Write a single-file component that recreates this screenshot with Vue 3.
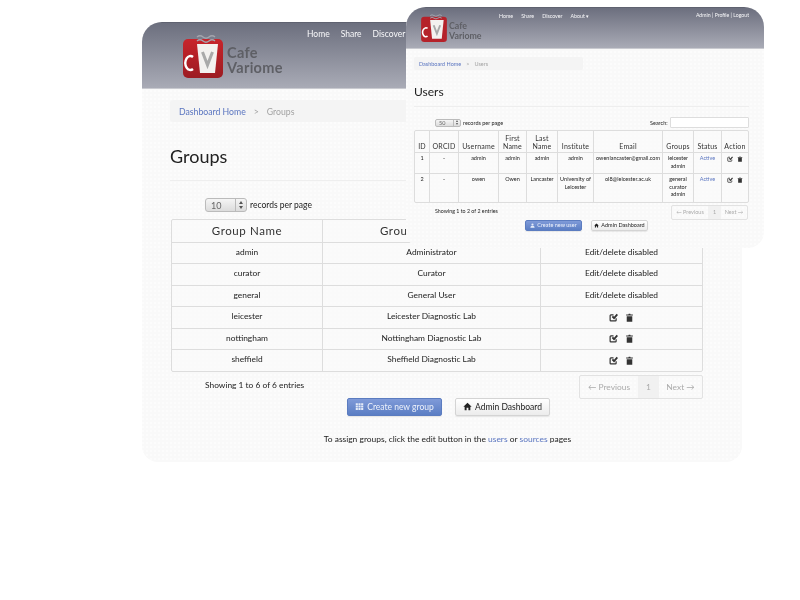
<template>
  <div class="desktop">
    <!-- back window: groups -->
    <section class="window groups-window">
      <header class="top-bar">
        <div class="logo">
          <svg class="logo-mark" viewBox="0 0 40 45">
            <defs>
              <linearGradient id="cup-red" x1="0" y1="0" x2="0" y2="1">
                <stop offset="0" stop-color="#c8242b" />
                <stop offset="1" stop-color="#9c1c22" />
              </linearGradient>
            </defs>
            <rect x="0" y="6" width="40" height="39" rx="5" fill="url(#cup-red)" />
            <path d="M14 4q3-2.4 6 0t6 0 6 0M14 8q3-2.4 6 0t6 0 6 0" fill="none" stroke="#a3a5ae" stroke-width="1.5" />
            <path d="M14 11 H35 L32 40 H17 Z" fill="#f3f1ef" />
            <path d="M19.5 19 L24.5 32 L29.5 19" fill="none" stroke="#a9a9a9" stroke-width="3" />
            <path d="M10 24 A5 7 0 1 0 10 36" fill="none" stroke="#fff" stroke-width="2.4" />
          </svg>
          <div class="logo-text">Cafe<br />Variome</div>
        </div>
        <nav class="nav">
          <a>Home</a><a>Share</a><a>Discover</a>
        </nav>
      </header>
      <div class="body">
        <div class="crumbs"><a>Dashboard Home</a><i>&gt;</i><span>Groups</span></div>
        <h1>Groups</h1>
        <hr />
        <div class="length">
          <span class="select"><b>10</b><em></em></span>
          records per page
        </div>
        <table>
          <colgroup>
            <col style="width: 150px" /><col style="width: 218px" /><col />
          </colgroup>
          <thead>
            <tr><th>Group Name</th><th>Group Description</th><th>Action</th></tr>
          </thead>
          <tbody>
            <tr v-for="g in groups" :key="g.name">
              <td>{{ g.name }}</td>
              <td>{{ g.desc }}</td>
              <td>
                <template v-if="g.locked">Edit/delete disabled</template>
                <span v-else class="actions">
                  <svg viewBox="0 0 12 12"><path d="M9.5 7v2.5a1 1 0 0 1-1 1h-6a1 1 0 0 1-1-1v-6a1 1 0 0 1 1-1H6" fill="none" stroke="#333" stroke-width="1.6" /><path d="M3.6 5.2l1.9-1.4 1.2 1.3L10.2 1 12 2.6 6.8 8.6z" fill="#333" /></svg>
                  <svg viewBox="0 0 12 12"><path d="M1.5 2h3l.5-1h2l.5 1h3v1.4h-9zM2.3 4.2h7.4v7.3H2.3z" fill="#333" /></svg>
                </span>
              </td>
            </tr>
          </tbody>
        </table>
        <div class="table-foot">
          <span class="info">Showing 1 to 6 of 6 entries</span>
          <div class="pager">
            <span>← Previous</span><span class="current">1</span><span>Next →</span>
          </div>
        </div>
        <div class="buttons">
          <a class="btn primary">
            <svg viewBox="0 0 12 12"><path d="M1 1.5h2.8v2.5H1zM4.6 1.5h2.8v2.5H4.6zM8.2 1.5H11v2.5H8.2zM1 4.8h2.8v2.5H1zM4.6 4.8h2.8v2.5H4.6zM8.2 4.8H11v2.5H8.2zM1 8.1h2.8v2.5H1zM4.6 8.1h2.8v2.5H4.6zM8.2 8.1H11v2.5H8.2z" fill="#e6ecf8" /></svg>
            Create new group
          </a>
          <a class="btn">
            <svg viewBox="0 0 12 12"><path d="M6 1L.5 6.2h1.7V11h2.6V7.6h2.4V11h2.6V6.2h1.7z" fill="#222" /></svg>
            Admin Dashboard
          </a>
        </div>
        <p class="note">To assign groups, click the edit button in the <a>users</a> or <a>sources</a> pages</p>
      </div>
    </section>

    <!-- front window: users -->
    <section class="window users-window">
      <header class="top-bar">
        <div class="logo">
          <svg class="logo-mark" viewBox="0 0 40 45">
            <rect x="0" y="6" width="40" height="39" rx="5" fill="#b5222a" />
            <path d="M14 4q3-2.4 6 0t6 0 6 0M14 8q3-2.4 6 0t6 0 6 0" fill="none" stroke="#a3a5ae" stroke-width="1.5" />
            <path d="M14 11 H35 L32 40 H17 Z" fill="#f3f1ef" />
            <path d="M19.5 19 L24.5 32 L29.5 19" fill="none" stroke="#a9a9a9" stroke-width="3" />
            <path d="M10 24 A5 7 0 1 0 10 36" fill="none" stroke="#fff" stroke-width="2.4" />
          </svg>
          <div class="logo-text">Cafe<br />Variome</div>
        </div>
        <nav class="nav">
          <a>Home</a><a>Share</a><a>Discover</a><a>About ▾</a>
        </nav>
        <div class="account">Admin | Profile | Logout</div>
      </header>
      <div class="body">
        <div class="crumbs"><a>Dashboard Home</a><i>&gt;</i><span>Users</span></div>
        <h1>Users</h1>
        <hr />
        <div class="length-row">
          <div class="length">
            <span class="select"><b>50</b><em></em></span>
            records per page
          </div>
          <div class="search">Search: <span class="input"></span></div>
        </div>
        <table>
          <colgroup>
            <col v-for="(w, i) in userCols" :key="i" :style="{ width: w + 'px' }" />
          </colgroup>
          <thead>
            <tr>
              <th>ID</th><th>ORCID</th><th>Username</th><th>First Name</th><th>Last Name</th>
              <th>Institute</th><th>Email</th><th>Groups</th><th>Status</th><th>Action</th>
            </tr>
          </thead>
          <tbody>
            <tr v-for="u in users" :key="u.id">
              <td>{{ u.id }}</td>
              <td>-</td>
              <td>{{ u.username }}</td>
              <td>{{ u.first }}</td>
              <td>{{ u.last }}</td>
              <td>{{ u.institute }}</td>
              <td>{{ u.email }}</td>
              <td><div v-for="g in u.groups" :key="g">{{ g }}</div></td>
              <td><a>Active</a></td>
              <td>
                <span class="actions">
                  <svg viewBox="0 0 12 12"><path d="M9.5 7v2.5a1 1 0 0 1-1 1h-6a1 1 0 0 1-1-1v-6a1 1 0 0 1 1-1H6" fill="none" stroke="#333" stroke-width="1.6" /><path d="M3.6 5.2l1.9-1.4 1.2 1.3L10.2 1 12 2.6 6.8 8.6z" fill="#333" /></svg>
                  <svg viewBox="0 0 12 12"><path d="M1.5 2h3l.5-1h2l.5 1h3v1.4h-9zM2.3 4.2h7.4v7.3H2.3z" fill="#333" /></svg>
                </span>
              </td>
            </tr>
          </tbody>
        </table>
        <div class="table-foot">
          <span class="info">Showing 1 to 2 of 2 entries</span>
          <div class="pager">
            <span>← Previous</span><span class="current">1</span><span>Next →</span>
          </div>
        </div>
        <div class="buttons">
          <a class="btn primary">
            <svg viewBox="0 0 12 12"><circle cx="6" cy="3.5" r="2.6" fill="#e6ecf8" /><path d="M1 11.5c0-3.4 2-4.8 5-4.8s5 1.4 5 4.8z" fill="#e6ecf8" /></svg>
            Create new user
          </a>
          <a class="btn">
            <svg viewBox="0 0 12 12"><path d="M6 1L.5 6.2h1.7V11h2.6V7.6h2.4V11h2.6V6.2h1.7z" fill="#222" /></svg>
            Admin Dashboard
          </a>
        </div>
      </div>
    </section>
  </div>
</template>

<script setup>
const groups = [
  { name: 'admin', desc: 'Administrator', locked: true },
  { name: 'curator', desc: 'Curator', locked: true },
  { name: 'general', desc: 'General User', locked: true },
  { name: 'leicester', desc: 'Leicester Diagnostic Lab' },
  { name: 'nottingham', desc: 'Nottingham Diagnostic Lab' },
  { name: 'sheffield', desc: 'Sheffield Diagnostic Lab' }
]

const userCols = [14, 29, 40, 28, 31, 36, 69, 31, 28, 27]

const users = [
  {
    id: 1, username: 'admin', first: 'admin', last: 'admin', institute: 'admin',
    email: 'owenlancaster@gmail.com', groups: ['leicester', 'admin']
  },
  {
    id: 2, username: 'owen', first: 'Owen', last: 'Lancaster', institute: 'University of Leicester',
    email: 'ol8@leicester.ac.uk', groups: ['general', 'curator', 'admin']
  }
]
</script>

<style scoped>
.desktop {
  position: relative;
  width: 800px;
  height: 600px;
  overflow: hidden;
  background: #fff;
  font-family: Lato, "Open Sans", sans-serif;
  color: #222;
}
.window {
  position: absolute;
  box-sizing: border-box;
  border-radius: 20px 20px 16px 16px;
  background-color: #f9f9f9;
  background-image:
    radial-gradient(circle at 1px 1px, #fcfcfc 1px, transparent 1.2px);
  background-size: 4px 4px;
  overflow: hidden;
  filter: blur(0.2px);
}
.groups-window {
  left: 142px;
  top: 22px;
  width: 600px;
  height: 440px;
}
.users-window {
  left: 406px;
  top: 7px;
  width: 358px;
  height: 241px;
  filter: blur(0.3px);
}
.top-bar {
  display: flex;
  align-items: flex-start;
  background: linear-gradient(#6c6f7e, #a9abb6);
  border-top: 1px solid #5f6270;
  border-bottom: 1px solid #c9cad0;
  box-sizing: border-box;
}
.nav {
  display: flex;
  color: #f8f8fa;
}
.logo {
  display: flex;
  align-items: flex-start;
  color: #5e5f65;
}
.logo-text {
  font-weight: 700;
}
.body {
  display: flow-root;
}
h1 {
  margin: 0;
  font-weight: 400;
  color: #222;
}
hr {
  border: 0;
  border-top: 1px solid #eeeeee;
  margin: 0;
}
.crumbs {
  display: flex;
  align-items: center;
  background: #f4f4f4;
  color: #a3a3a3;
}
.crumbs i {
  font-style: normal;
}
.crumbs a,
.note a,
td a {
  color: #5a75c0;
}
.length {
  display: flex;
  align-items: center;
}
.select {
  display: inline-flex;
  align-items: center;
  box-sizing: border-box;
  border: 1px solid #bbb;
  background: linear-gradient(#f5f5f5, #dcdcdc);
  color: #666;
}
.select b {
  flex: 1;
  font-weight: 400;
}
.select em {
  align-self: stretch;
  border-left: 1px solid #bbb;
  position: relative;
}
.select em::before {
  content: "";
  position: absolute;
  left: 50%;
  top: 50%;
  width: 0;
  height: 0;
  margin-left: -2px;
  margin-top: -4px;
  border: 2px solid transparent;
  border-bottom: 3px solid #555;
  border-top: 0;
}
.select em::after {
  content: "";
  position: absolute;
  left: 50%;
  top: 50%;
  width: 0;
  height: 0;
  margin-left: -2px;
  margin-top: 1px;
  border: 2px solid transparent;
  border-top: 3px solid #555;
  border-bottom: 0;
}
table {
  table-layout: fixed;
  border-collapse: separate;
  border-spacing: 0;
  border: 1px solid #dddddd;
  border-radius: 2px;
  text-align: center;
  background: rgba(250, 250, 250, 0.6);
  box-sizing: border-box;
}
th,
td {
  padding: 0;
  box-sizing: border-box;
}
th {
  font-weight: 400;
  color: #333;
  border-left: 1px solid #dddddd;
  vertical-align: bottom;
}
td {
  border-top: 1px solid #dddddd;
  border-left: 1px solid #dddddd;
  vertical-align: top;
}
th:first-child,
td:first-child {
  border-left: 0;
}
.actions {
  display: inline-flex;
  align-items: center;
  vertical-align: middle;
}
.actions svg {
  display: block;
}
.table-foot {
  display: flex;
  justify-content: space-between;
  align-items: flex-start;
}
.pager {
  display: flex;
  border: 1px solid #e2e2e2;
  border-radius: 2px;
  color: #aaa;
  box-sizing: border-box;
}
.pager span {
  display: flex;
  align-items: center;
  justify-content: center;
}
.pager .current {
  background: #f1f1f1;
}
.buttons {
  display: flex;
  justify-content: center;
}
.btn {
  display: flex;
  align-items: center;
  justify-content: center;
  box-sizing: border-box;
  border: 1px solid #d4d4d4;
  border-radius: 2px;
  background: linear-gradient(#ffffff, #ececec);
  color: #222;
  box-shadow: 0 1px 1px rgba(0, 0, 0, 0.08);
}
.btn.primary {
  border-color: #5b7cc0;
  background: linear-gradient(#7f9ad8, #5b7ec4);
  color: #eef2fb;
}

/* back window sizes */
.groups-window .top-bar {
  height: 67px;
  padding-left: 41px;
}
.groups-window .logo {
  margin-top: 10px;
  gap: 4px;
}
.groups-window .logo-mark {
  width: 40px;
  height: 45px;
}
.groups-window .logo-text {
  width: 56px;
  margin-top: 12px;
  font-size: 14.5px;
  line-height: 15px;
  letter-spacing: 0.3px;
}
.groups-window .nav {
  margin-left: 24px;
  margin-top: 5px;
  gap: 11px;
  font-size: 8.5px;
  line-height: 13px;
}
.groups-window .body {
  padding: 11px 39px 0 28px;
}
.groups-window .crumbs {
  height: 22px;
  padding-left: 9px;
  gap: 8px;
  font-size: 8.7px;
  border-radius: 3px;
}
.groups-window h1 {
  margin-top: 23px;
  font-size: 18px;
  line-height: 22px;
}
.groups-window hr {
  margin-top: 13px;
}
.groups-window .length {
  margin: 17px 0 0 35px;
  gap: 3px;
  height: 14px;
  font-size: 8.5px;
}
.groups-window .select {
  width: 42px;
  height: 14px;
  border-radius: 3px;
  font-size: 9px;
  padding-left: 5px;
}
.groups-window .select em {
  width: 10px;
}
.groups-window table {
  width: 532px;
  margin-top: 7px;
  margin-left: 1px;
  font-size: 8.4px;
}
.groups-window th {
  height: 21.5px;
  font-size: 11.5px;
  letter-spacing: 0.6px;
  vertical-align: middle;
}
.groups-window td {
  height: 21.5px;
  vertical-align: middle;
  line-height: 12px;
  padding-bottom: 2px;
}
.groups-window .actions {
  gap: 7px;
}
.groups-window .actions svg {
  width: 9px;
  height: 9px;
}
.groups-window .table-foot {
  margin-left: 1px;
  margin-top: 3px;
  padding-left: 34px;
  font-size: 8.4px;
  height: 23px;
}
.groups-window .info {
  margin-top: 5px;
}
.groups-window .pager {
  width: 124px;
  height: 24px;
  font-size: 8.4px;
}
.groups-window .pager span:first-child {
  width: 58px;
}
.groups-window .pager .current {
  width: 21px;
}
.groups-window .pager span:last-child {
  flex: 1;
}
.groups-window .buttons {
  gap: 13px;
  margin-left: 24px;
}
.groups-window .btn {
  height: 18px;
  font-size: 8.5px;
  gap: 3px;
  width: 95px;
}
.groups-window .btn svg {
  width: 9px;
  height: 9px;
}
.groups-window .note {
  margin: 18px 0 0;
  text-align: center;
  font-size: 8.45px;
  line-height: 11px;
  padding-left: 22px;
}

/* front window sizes */
.users-window .top-bar {
  height: 42px;
  padding-left: 15px;
}
.users-window .logo {
  margin-top: 5px;
  gap: 2px;
}
.users-window .logo-mark {
  width: 26px;
  height: 29px;
}
.users-window .logo-text {
  width: 35px;
  margin-top: 8px;
  font-size: 8.8px;
  line-height: 9.5px;
}
.users-window .nav {
  margin-left: 15px;
  margin-top: 4px;
  gap: 8px;
  font-size: 5.3px;
  line-height: 8px;
}
.users-window .account {
  margin-left: auto;
  margin-right: 15px;
  margin-top: 3px;
  font-size: 5.2px;
  line-height: 8px;
  color: #f8f8fa;
}
.users-window .body {
  padding: 8px 15px 0 8px;
}
.users-window .crumbs {
  width: 164px;
  height: 13px;
  padding-left: 5px;
  gap: 5px;
  font-size: 5.5px;
  border-radius: 2px;
}
.users-window h1 {
  margin-top: 15px;
  font-size: 12px;
  line-height: 14px;
}
.users-window hr {
  margin-top: 7px;
}
.users-window .length-row {
  display: flex;
  justify-content: space-between;
  align-items: center;
  margin-top: 10px;
  height: 11px;
}
.users-window .length {
  margin-left: 21px;
  gap: 2px;
  font-size: 5.5px;
}
.users-window .select {
  width: 26px;
  height: 8px;
  border-radius: 2px;
  font-size: 5.5px;
  padding-left: 3px;
}
.users-window .select em {
  width: 6px;
}
.users-window .select em::before {
  margin-top: -3px;
  border-width: 1px;
  border-bottom-width: 2px;
  border-top: 0;
  margin-left: -1px;
}
.users-window .select em::after {
  margin-top: 0;
  border-width: 1px;
  border-top-width: 2px;
  border-bottom: 0;
  margin-left: -1px;
}
.users-window .search {
  display: flex;
  align-items: center;
  gap: 1px;
  font-size: 5.5px;
  white-space: pre;
}
.users-window .input {
  width: 79px;
  height: 11px;
  box-sizing: border-box;
  border: 1px solid #ddd;
  background: #fff;
  border-radius: 1px;
}
.users-window table {
  width: 335px;
  margin-top: 2px;
  font-size: 5.5px;
  line-height: 7.6px;
}
.users-window th {
  height: 21px;
  font-size: 7px;
  line-height: 8px;
  letter-spacing: 0.2px;
  padding-bottom: 2px;
}
.users-window td {
  padding: 2px 0 3px;
}
.users-window .actions {
  gap: 4px;
}
.users-window .actions svg {
  width: 6px;
  height: 6px;
}
.users-window .table-foot {
  margin-top: 2px;
  padding-left: 21px;
  font-size: 5.3px;
  height: 15px;
}
.users-window .info {
  margin-top: 3px;
}
.users-window .pager {
  width: 77px;
  height: 15px;
  margin-right: 1px;
  font-size: 5.5px;
}
.users-window .pager span:first-child {
  width: 36px;
}
.users-window .pager .current {
  width: 13px;
}
.users-window .pager span:last-child {
  flex: 1;
}
.users-window .buttons {
  gap: 9px;
  margin-left: 10px;
}
.users-window .btn {
  height: 11px;
  font-size: 5.5px;
  gap: 2px;
  width: 57px;
}
.users-window .btn svg {
  width: 5px;
  height: 5px;
}
</style>

<style>
html,
body {
  margin: 0;
  background: #fff;
}
</style>
